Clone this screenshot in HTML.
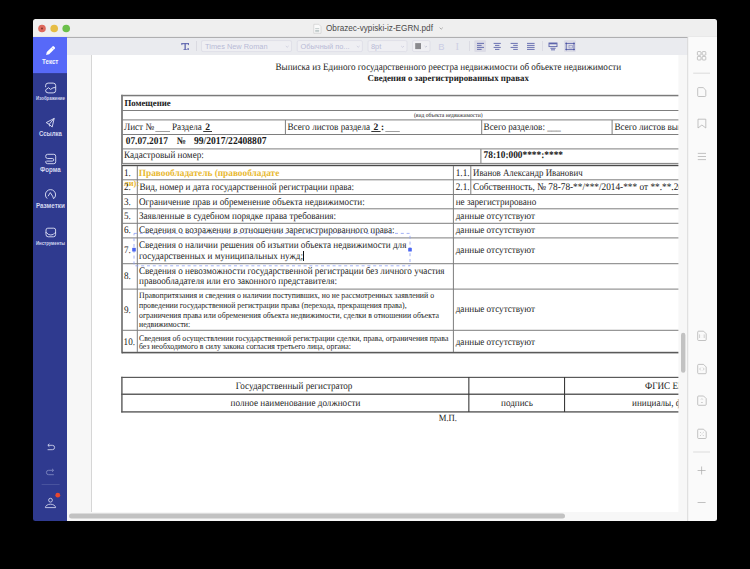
<!DOCTYPE html>
<html><head><meta charset="utf-8">
<style>
*{margin:0;padding:0;box-sizing:border-box}
html,body{width:750px;height:569px;overflow:hidden;background:#000}
body{position:relative;font-family:"Liberation Sans",sans-serif}
.a{position:absolute}
#win{left:33px;top:19px;width:684px;height:502px;border-radius:4px;overflow:hidden;background:#f6f6f6}
svg{position:absolute;left:0;top:0;overflow:visible}
</style></head>
<body>
<!-- CHROME SVG (body coords) -->
<svg width="750" height="569" viewBox="0 0 750 569">
  <defs>
    <clipPath id="wclip"><rect x="33" y="19" width="684" height="502" rx="2.5"/></clipPath>
    <clipPath id="pclip"><rect x="91" y="55" width="587.4" height="457"/></clipPath>
  </defs>
  <g clip-path="url(#wclip)">
    <!-- title bar -->
    <rect x="33" y="19" width="684" height="18" fill="#efefef"/>
    <rect x="33" y="36.6" width="684" height="1" fill="#e0e0e0"/>
    <circle cx="42" cy="28.5" r="3.8" fill="#de6a5e"/>
    <circle cx="42" cy="28.5" r="0.9" fill="#7a2a22"/>
    <circle cx="54.2" cy="28.5" r="3.8" fill="#e6bd45"/>
    <circle cx="66.2" cy="28.5" r="3.8" fill="#6cc04b"/>
    <!-- title -->
    <g id="doci">
      <path d="M313.8 24.3 h5 l2.2 2.2 v6.8 h-7.2 z" fill="#fafafa" stroke="#c8c8c8" stroke-width="0.6"/>
      <rect x="315.2" y="28.5" width="4" height="0.6" fill="#9aa"/>
      <rect x="315.2" y="30" width="4" height="0.6" fill="#9aa"/>
      <rect x="315.2" y="31.5" width="4" height="0.6" fill="#9aa"/>
    </g>
    <text x="326" y="31.4" font-family="Liberation Sans" font-size="8.2" fill="#4a4a4a">Obrazec-vypiski-iz-EGRN.pdf</text>
    <path d="M439.6 27.6 l1.6 1.6 l1.6 -1.6" fill="none" stroke="#9a9a9a" stroke-width="0.8"/>

    <!-- sidebar -->
    <rect x="33" y="37" width="34" height="484" fill="#2f3a8f"/>
    <rect x="33" y="37" width="34" height="36.4" fill="#5769f8"/>
    <rect x="33" y="73.4" width="34" height="0.7" fill="#2b3586"/>
    <g id="sb" font-family="Liberation Sans" font-weight="bold" text-anchor="middle">
      <!-- pencil -->
      <path d="M46.1 54.9 L46.8 52 L52.4 46.4 a1.1 1.1 0 0 1 1.55 0 l0.8 0.8 a1.1 1.1 0 0 1 0 1.55 L49.1 54.3 Z" fill="#ffffff"/>
      <path d="M51.6 47.4 L53.7 49.5" stroke="#5767f7" stroke-width="0.45"/>
      <text x="50.2" y="63.8" font-size="6.6" textLength="16.4" lengthAdjust="spacingAndGlyphs" fill="#f4f5ff">Текст</text>
      <!-- image -->
      <path d="M45.6 87.2 V85.6 a2.5 2.5 0 0 1 2.5 -2.5 H53.2 a2.5 2.5 0 0 1 2.5 2.5 V90.4 a2.5 2.5 0 0 1 -2.5 2.5 H48.1 a2.5 2.5 0 0 1 -2.5 -2.5 V89.9 L48.5 87.7 L50.6 89.4 L53 87.8 L55.7 87.5" fill="none" stroke="#d4d8f0" stroke-width="1" stroke-linejoin="round"/>
      <text x="50.5" y="99.6" font-size="4.6" textLength="29" lengthAdjust="spacingAndGlyphs" fill="#d3d7ef">Изображение</text>
      <!-- link / plane -->
      <path d="M54.2 118.4 L46.2 122.6 L49.2 124.3 L52.2 127 Z" fill="none" stroke="#dfe2f6" stroke-width="0.9" stroke-linejoin="round"/>
      <path d="M54.2 118.4 L49.2 124.3 L49.6 126.4" fill="none" stroke="#dfe2f6" stroke-width="0.9"/>
      <text x="50.4" y="136.3" font-size="6.6" textLength="23" lengthAdjust="spacingAndGlyphs" fill="#d3d7ef">Ссылка</text>
      <!-- form -->
      <path d="M47.6 154.3 H53.8 a1.9 1.9 0 0 1 1.9 1.9 V161.8 a1.9 1.9 0 0 1 -1.9 1.9 H47.6 a1.9 1.9 0 0 1 -1.9 -1.9 V161.2" fill="none" stroke="#dfe2f6" stroke-width="0.9"/>
      <path d="M47.6 154.3 a1.9 1.9 0 0 0 -1.9 1.9 v0.4 a1.9 1.9 0 0 0 1.9 1.9 H52.4 a1.3 1.3 0 0 1 0 2.6 H46.4" fill="none" stroke="#dfe2f6" stroke-width="0.9"/>
      <text x="50.4" y="172.3" font-size="6.6" textLength="20.7" lengthAdjust="spacingAndGlyphs" fill="#d3d7ef">Форма</text>
      <!-- markup -->
      <path d="M47.2 198.6 A5.1 5.1 0 1 1 53.8 198.6" fill="none" stroke="#dfe2f6" stroke-width="0.9"/>
      <path d="M48.1 196.2 L50.3 192.6 L52.6 196.2 L53.6 198.8" fill="none" stroke="#dfe2f6" stroke-width="0.9" stroke-linejoin="round"/>
      <text x="50.4" y="208.3" font-size="6.6" textLength="29" lengthAdjust="spacingAndGlyphs" fill="#d3d7ef">Разметки</text>
      <!-- tools -->
      <path d="M47.8 228.2 H53.8 a1.8 1.8 0 0 1 1.8 1.8 V234.6 a2.2 2.2 0 0 1 -2.2 2.2 H48.2 a2.2 2.2 0 0 1 -2.2 -2.2 V230 a1.8 1.8 0 0 1 1.8 -1.8 Z" fill="none" stroke="#dfe2f6" stroke-width="0.9"/>
      <path d="M45.6 232.6 h1 q1.2 2.4 4.2 2.4 q3 0 4.2 -2.4 h1" fill="none" stroke="#dfe2f6" stroke-width="0.9"/>
      <text x="50.5" y="244.5" font-size="4.6" textLength="29" lengthAdjust="spacingAndGlyphs" fill="#d3d7ef">Инструменты</text>
      <!-- undo -->
      <path d="M48 445.3 H52.4 a2.2 2.2 0 0 1 0 4.4 H47.6" fill="none" stroke="#dfe2f6" stroke-width="0.8"/>
      <path d="M49.4 443.8 L47.8 445.3 L49.4 446.8" fill="none" stroke="#dfe2f6" stroke-width="0.8"/>
      <!-- redo -->
      <path d="M53.4 470.3 H48.6 a2.2 2.2 0 0 0 0 4.4 H53.8" fill="none" stroke="#8890c6" stroke-width="0.8"/>
      <path d="M52 468.8 L53.6 470.3 L52 471.8" fill="none" stroke="#8890c6" stroke-width="0.8"/>
      <rect x="41.6" y="484.2" width="18" height="0.6" fill="#5a64a8"/>
      <!-- user -->
      <circle cx="50.5" cy="500.2" r="1.9" fill="none" stroke="#dfe2f6" stroke-width="0.8"/>
      <path d="M45.4 507.6 a5.1 3.4 0 0 1 10.2 0 Z" fill="none" stroke="#dfe2f6" stroke-width="0.8" stroke-linejoin="round"/>
      <circle cx="57.8" cy="495.2" r="2.4" fill="#e8472e"/>
    </g>

    <!-- toolbar -->
    <rect x="67" y="37.6" width="621" height="17.4" fill="#eaebef"/>
    <g id="tb">
      <!-- T. icon -->
      <g fill="#5f66ae">
      <rect x="181.5" y="43.1" width="7.4" height="1.1"/>
      <rect x="181.4" y="43.1" width="0.9" height="2"/>
      <rect x="188.1" y="43.1" width="0.9" height="2"/>
      <rect x="184.5" y="43.1" width="1.3" height="6.6"/>
      <rect x="183.5" y="49" width="3.3" height="0.8"/>
      <rect x="187.3" y="48.3" width="1.7" height="1.5"/>
      </g>
      <rect x="196" y="41" width="0.8" height="10" fill="#d6d6de"/>
      <!-- dropdowns -->
      <rect x="201.5" y="40.6" width="90" height="11" rx="1.5" fill="#efeff3" stroke="#dcdce6" stroke-width="0.8"/>
      <text x="205" y="49.2" font-family="Liberation Sans" font-size="7.4" fill="#b9bbd6">Times New Roman</text>
      <path d="M285.8 46 l1.4 1.3 l1.4 -1.3" fill="none" stroke="#c4c6d8" stroke-width="0.7"/>
      <rect x="297.2" y="40.6" width="65.2" height="11" rx="1.5" fill="#efeff3" stroke="#dcdce6" stroke-width="0.8"/>
      <text x="300.5" y="49.2" font-family="Liberation Sans" font-size="7.4" fill="#b9bbd6">Обычный по...</text>
      <path d="M356.8 46 l1.4 1.3 l1.4 -1.3" fill="none" stroke="#c4c6d8" stroke-width="0.7"/>
      <rect x="368" y="40.6" width="39" height="11" rx="1.5" fill="#efeff3" stroke="#dcdce6" stroke-width="0.8"/>
      <text x="371" y="49.2" font-family="Liberation Sans" font-size="7.4" fill="#b9bbd6">8pt</text>
      <path d="M401.2 46 l1.4 1.3 l1.4 -1.3" fill="none" stroke="#c4c6d8" stroke-width="0.7"/>
      <rect x="412.5" y="40.6" width="17.5" height="11" rx="1.5" fill="#efeff3" stroke="#dcdce6" stroke-width="0.8"/>
      <rect x="415.2" y="43.1" width="5.8" height="6" fill="#8a8a8e"/>
      <path d="M424.6 46 l1.2 1.1 l1.2 -1.1" fill="none" stroke="#b8bacc" stroke-width="0.7"/>
      <text x="438.2" y="49.8" font-family="Liberation Sans" font-size="9.4" fill="#cacde5">B</text>
      <text x="455.4" y="50" font-family="Liberation Serif" font-size="10.5" fill="#cfd0e4">I</text>
      <rect x="469.2" y="41" width="0.8" height="10" fill="#d8d8e0"/>
      <!-- align left (active) -->
      <rect x="474.3" y="40.2" width="11.7" height="11.7" rx="1" fill="#dcdce6"/>
      <g fill="#5d64ab">
        <rect x="477" y="42.9" width="7" height="0.9"/>
        <rect x="477" y="44.9" width="4.6" height="0.9"/>
        <rect x="477" y="46.9" width="7" height="0.9"/>
        <rect x="477" y="48.9" width="4.6" height="0.9"/>
        <!-- center -->
        <rect x="493.6" y="42.9" width="7.2" height="0.9"/>
        <rect x="495" y="44.9" width="4.4" height="0.9"/>
        <rect x="493.6" y="46.9" width="7.2" height="0.9"/>
        <rect x="495" y="48.9" width="4.4" height="0.9"/>
        <!-- right -->
        <rect x="510.6" y="42.9" width="7.2" height="0.9"/>
        <rect x="513.2" y="44.9" width="4.6" height="0.9"/>
        <rect x="510.6" y="46.9" width="7.2" height="0.9"/>
        <rect x="513.2" y="48.9" width="4.6" height="0.9"/>
        <!-- justify -->
        <rect x="527" y="42.9" width="7.6" height="0.9"/>
        <rect x="527" y="44.9" width="7.6" height="0.9"/>
        <rect x="527" y="46.9" width="7.6" height="0.9"/>
        <rect x="527" y="48.9" width="7.6" height="0.9"/>
      </g>
      <rect x="542" y="41" width="0.8" height="10" fill="#d8d8e0"/>
      <!-- icon fit -->
      <rect x="549" y="43" width="8" height="3.6" fill="none" stroke="#5d64ab" stroke-width="0.9"/>
      <rect x="549.2" y="43" width="7.6" height="1.3" fill="#5d64ab"/>
      <rect x="550.4" y="47.8" width="5.2" height="0.9" fill="#5d64ab"/>
      <rect x="551" y="49.4" width="4" height="0.9" fill="#5d64ab"/>
      <!-- icon active -->
      <rect x="564" y="40.2" width="11.8" height="11.7" rx="1" fill="#dcdce6"/>
      <rect x="566.2" y="43.4" width="7.8" height="6.2" fill="none" stroke="#5d64ab" stroke-width="0.9"/>
      <rect x="569" y="45.4" width="3.6" height="2.6" fill="none" stroke="#8a8fc4" stroke-width="0.6"/>
      <g fill="#4b53a3"><circle cx="566.2" cy="43.4" r="0.8"/><circle cx="574" cy="43.4" r="0.8"/><circle cx="566.2" cy="49.6" r="0.8"/><circle cx="574" cy="49.6" r="0.8"/></g>
    </g>
    <!-- page area -->
    <rect x="67" y="55" width="621" height="466" fill="#f7f7f7"/>
    <rect x="91" y="55" width="587.4" height="457" fill="#ffffff"/>
    <rect x="91" y="55" width="1" height="457" fill="#d6d6d6"/>
    <g id="doc" clip-path="url(#pclip)" font-family="Liberation Serif" fill="#1a1a1a" text-rendering="geometricPrecision">
      <text x="275.5" y="70" font-size="10.05" textLength="345.58" lengthAdjust="spacingAndGlyphs">Выписка из Единого государственного реестра недвижимости об объекте недвижимости</text>
      <text x="367.5" y="81.1" font-weight="bold" font-size="9.11" textLength="161.34" lengthAdjust="spacingAndGlyphs">Сведения о зарегистрированных правах</text>
      <!-- table lines -->
      <g id="lines" stroke="none">
        <rect x="121.2" y="94.8" width="560" height="1.5" fill="#7a7a7a"/>
        <rect x="121.1" y="94.8" width="1.8" height="258.6" fill="#7a7a7a"/>
        <rect x="122" y="110" width="560" height="1" fill="#7e7e7e"/>
        <rect x="122" y="119.4" width="560" height="1" fill="#7e7e7e"/>
        <rect x="122" y="134" width="560" height="1" fill="#7e7e7e"/>
        <rect x="122" y="148.4" width="560" height="1" fill="#7e7e7e"/>
        <rect x="122" y="162.9" width="560" height="1" fill="#7e7e7e"/>
        <rect x="122" y="164" width="560" height="1" fill="#d0d0d0"/>
        <rect x="122" y="165" width="560" height="1.2" fill="#4a4a4a"/>
        <rect x="122" y="179.3" width="560" height="1" fill="#7e7e7e"/>
        <rect x="122" y="194" width="560" height="1" fill="#7e7e7e"/>
        <rect x="122" y="208.3" width="560" height="1" fill="#7e7e7e"/>
        <rect x="122" y="222.8" width="560" height="1" fill="#7e7e7e"/>
        <rect x="122" y="237.4" width="560" height="1" fill="#7e7e7e"/>
        <rect x="122" y="263.2" width="560" height="1" fill="#7e7e7e"/>
        <rect x="122" y="288.6" width="560" height="1" fill="#7e7e7e"/>
        <rect x="122" y="329.8" width="560" height="1" fill="#7e7e7e"/>
        <rect x="122" y="351.8" width="560" height="1.6" fill="#5a5a5a"/>
        <rect x="284.9" y="120" width="1" height="14.4" fill="#7e7e7e"/>
        <rect x="481.2" y="120" width="1" height="14.4" fill="#7e7e7e"/>
        <rect x="611.6" y="120" width="1" height="14.4" fill="#7e7e7e"/>
        <rect x="480.4" y="149" width="1" height="14.4" fill="#7e7e7e"/>
        <rect x="136.8" y="166" width="1" height="186" fill="#7e7e7e"/>
        <rect x="452.9" y="166" width="1" height="186" fill="#7e7e7e"/>
        <rect x="470.3" y="166" width="1" height="28.4" fill="#7e7e7e"/>
        <!-- signature table -->
        <rect x="121.2" y="376.8" width="560" height="1.2" fill="#5a5a5a"/>
        <rect x="121.2" y="393.6" width="560" height="1.2" fill="#3a3a3a"/>
        <rect x="121.2" y="411.2" width="560" height="1.4" fill="#5a5a5a"/>
        <rect x="121.2" y="376.8" width="1.4" height="35.6" fill="#5a5a5a"/>
        <rect x="468.3" y="377" width="1.1" height="35" fill="#3a3a3a"/>
        <rect x="564" y="377" width="1.1" height="35" fill="#3a3a3a"/>
      </g>
      <g font-size="9.15">
        <text x="124.4" y="106" font-weight="bold" font-size="9.06" textLength="46.34" lengthAdjust="spacingAndGlyphs">Помещение</text>
        <text x="414" y="117" font-size="6.16" textLength="68.67" lengthAdjust="spacingAndGlyphs">(вид объекта недвижимости)</text>
        <text x="124" y="130" font-size="10.07" textLength="30.11" lengthAdjust="spacingAndGlyphs">Лист №</text>
        <rect x="155.3" y="131" width="14.7" height="0.7" fill="#777" stroke="none"/>
        <text x="172" y="130" font-size="10.07" textLength="29.88" lengthAdjust="spacingAndGlyphs">Раздела</text>
        <text x="205.2" y="130" font-weight="bold" font-size="9.89" textLength="4.80" lengthAdjust="spacingAndGlyphs">2</text>
        <rect x="203.2" y="131" width="8.8" height="0.9" fill="#222" stroke="none"/>
        <text x="287.5" y="130" font-size="10.07" textLength="82.52" lengthAdjust="spacingAndGlyphs">Всего листов раздела</text>
        <text x="373.4" y="130" font-weight="bold" font-size="9.89" textLength="4.80" lengthAdjust="spacingAndGlyphs">2</text>
        <rect x="371.3" y="131" width="9.3" height="0.9" fill="#222" stroke="none"/>
        <text x="381" y="130" font-weight="bold" font-size="9.42" textLength="3.05" lengthAdjust="spacingAndGlyphs">:</text>
        <rect x="385.3" y="131.2" width="14.5" height="0.7" fill="#777" stroke="none"/>
        <text x="483.6" y="130" font-size="10.07" textLength="77.34" lengthAdjust="spacingAndGlyphs">Всего разделов: ___</text>
        <text x="614.4" y="130" font-size="10.07" textLength="105.25" lengthAdjust="spacingAndGlyphs">Всего листов выписки: ___</text>
        <g font-weight="bold">
          <text x="125.7" y="144" font-size="10.34" textLength="42.19" lengthAdjust="spacingAndGlyphs">07.07.2017</text>
          <text x="176.7" y="144" font-size="10.07" textLength="9.17" lengthAdjust="spacingAndGlyphs">№</text>
          <text x="194" y="144" font-size="10.56" textLength="72.50" lengthAdjust="spacingAndGlyphs">99/2017/22408807</text>
          <text x="483.6" y="158.3" font-size="10.29" textLength="79.42" lengthAdjust="spacingAndGlyphs">78:10:000****:****</text>
        </g>
        <text x="124" y="158.2" font-size="10.07" textLength="79.78" lengthAdjust="spacingAndGlyphs">Кадастровый номер:</text>
        <!-- rows -->
        <text x="124" y="175.7" font-size="10.07" textLength="6.84" lengthAdjust="spacingAndGlyphs">1.</text>
        <text x="138.8" y="175.7" font-weight="bold" fill="#e8b830" font-size="9.58" textLength="140.47" lengthAdjust="spacingAndGlyphs">Правообладатель (правообладате</text>
        <text x="455.8" y="175.7" font-size="10.07" textLength="13.69" lengthAdjust="spacingAndGlyphs">1.1.</text>
        <text x="473" y="175.7" font-size="9.76" textLength="109.62" lengthAdjust="spacingAndGlyphs">Иванов Александр Иванович</text>
        <text x="123.9" y="186.3" font-weight="bold" fill="#e8b830" font-size="8.76" textLength="15.33" lengthAdjust="spacingAndGlyphs">ли):</text>
        <text x="124" y="189.8" font-size="10.07" textLength="6.84" lengthAdjust="spacingAndGlyphs">2.</text>
        <text x="139.4" y="189.8" font-size="10.07" textLength="214.69" lengthAdjust="spacingAndGlyphs">Вид, номер и дата государственной регистрации права:</text>
        <text x="455.8" y="189.8" font-size="10.07" textLength="13.69" lengthAdjust="spacingAndGlyphs">2.1.</text>
        <text x="473" y="189.8" font-size="10.23" textLength="219.25" lengthAdjust="spacingAndGlyphs">Собственность, № 78-78-**/***/2014-*** от **.**.2014</text>
        <text x="124" y="204.8" font-size="10.07" textLength="6.84" lengthAdjust="spacingAndGlyphs">3.</text>
        <text x="139" y="204.6" font-size="10.07" textLength="225.73" lengthAdjust="spacingAndGlyphs">Ограничение прав и обременение объекта недвижимости:</text>
        <text x="455.7" y="204.6" font-size="10.07" textLength="80.52" lengthAdjust="spacingAndGlyphs">не зарегистрировано</text>
        <text x="124" y="219.2" font-size="10.07" textLength="6.84" lengthAdjust="spacingAndGlyphs">5.</text>
        <text x="139" y="219" font-size="10.07" textLength="197.08" lengthAdjust="spacingAndGlyphs">Заявленные в судебном порядке права требования:</text>
        <text x="455.7" y="219" font-size="10.07" textLength="79.34" lengthAdjust="spacingAndGlyphs">данные отсутствуют</text>
        <text x="124" y="233.3" font-size="10.07" textLength="6.84" lengthAdjust="spacingAndGlyphs">6.</text>
        <text x="139" y="233.3" font-size="10.07" textLength="255.53" lengthAdjust="spacingAndGlyphs">Сведения о возражении в отношении зарегистрированного права:</text>
        <text x="455.7" y="233.4" font-size="10.07" textLength="79.34" lengthAdjust="spacingAndGlyphs">данные отсутствуют</text>
        <text x="124" y="253.3" font-size="10.07" textLength="6.84" lengthAdjust="spacingAndGlyphs">7.</text>
        <text x="139" y="248" font-size="10.07" textLength="267.34" lengthAdjust="spacingAndGlyphs">Сведения о наличии решения об изъятии объекта недвижимости для</text>
        <text x="139" y="259.2" font-size="10.07" textLength="164.00" lengthAdjust="spacingAndGlyphs">государственных и муниципальных нужд;</text>
        <text x="455.7" y="253" font-size="10.07" textLength="79.34" lengthAdjust="spacingAndGlyphs">данные отсутствуют</text>
        <text x="124" y="279.4" font-size="10.07" textLength="6.84" lengthAdjust="spacingAndGlyphs">8.</text>
        <text x="139" y="273.7" font-size="10.07" textLength="305.53" lengthAdjust="spacingAndGlyphs">Сведения о невозможности государственной регистрации без личного участия</text>
        <text x="139" y="284.2" font-size="10.07" textLength="198.03" lengthAdjust="spacingAndGlyphs">правообладателя или его законного представителя:</text>
        <text x="124" y="312.8" font-size="10.07" textLength="6.84" lengthAdjust="spacingAndGlyphs">9.</text>
        <g font-size="7.8">
          <text x="139" y="298.4" font-size="8.58" textLength="295.05" lengthAdjust="spacingAndGlyphs">Правопритязания и сведения о наличии поступивших, но не рассмотренных заявлений о</text>
          <text x="139" y="308" font-size="8.58" textLength="267.64" lengthAdjust="spacingAndGlyphs">проведении государственной регистрации права (перехода, прекращения права),</text>
          <text x="139" y="317.6" font-size="8.58" textLength="299.89" lengthAdjust="spacingAndGlyphs">ограничения права или обременения объекта недвижимости, сделки в отношении объекта</text>
          <text x="139" y="327.1" font-size="8.58" textLength="51.16" lengthAdjust="spacingAndGlyphs">недвижимости:</text>
          <text x="139" y="340.6" font-size="8.58" textLength="309.38" lengthAdjust="spacingAndGlyphs">Сведения об осуществлении государственной регистрации сделки, права, ограничения права</text>
          <text x="139" y="349.4" font-size="8.58" textLength="211.84" lengthAdjust="spacingAndGlyphs">без необходимого в силу закона согласия третьего лица, органа:</text>
        </g>
        <text x="455.7" y="312.4" font-size="10.07" textLength="79.34" lengthAdjust="spacingAndGlyphs">данные отсутствуют</text>
        <text x="123.6" y="345" font-size="10.07" textLength="11.41" lengthAdjust="spacingAndGlyphs">10.</text>
        <text x="455.7" y="344.6" font-size="10.07" textLength="79.34" lengthAdjust="spacingAndGlyphs">данные отсутствуют</text>
        <!-- signature -->
        <text x="235.8" y="388.9" font-size="10.07" textLength="116.61" lengthAdjust="spacingAndGlyphs">Государственный регистратор</text>
        <text x="230.6" y="405.7" font-size="10.07" textLength="129.73" lengthAdjust="spacingAndGlyphs">полное наименование должности</text>
        <text x="501" y="405.7" font-size="10.07" textLength="31.81" lengthAdjust="spacingAndGlyphs">подпись</text>
        <text x="645" y="388.9" font-size="10.07" textLength="49.97" lengthAdjust="spacingAndGlyphs">ФГИС ЕГРН</text>
        <text x="632" y="405.7" font-size="10.07" textLength="78.06" lengthAdjust="spacingAndGlyphs">инициалы, фамилия</text>
        <text x="438.7" y="420.8" font-size="9.54" textLength="18.28" lengthAdjust="spacingAndGlyphs">М.П.</text>
      </g>
    </g>
    <g id="editbox">
      <rect x="134" y="233.4" width="276" height="32.4" fill="none" stroke="#8da0f4" stroke-width="0.8" stroke-dasharray="3 2.8"/>
      <rect x="132.2" y="247.8" width="3.6" height="3.8" rx="0.6" fill="#4b66f2"/>
      <rect x="408.2" y="247.8" width="3.6" height="3.8" rx="0.6" fill="#4b66f2"/>
      <rect x="303" y="251" width="1" height="10" fill="#111"/>
    </g>
    <!-- right panel -->
    <rect x="688" y="37" width="29" height="484" fill="#fafafa"/>
    <rect x="687.3" y="37" width="0.9" height="484" fill="#d6d6d6"/>
    <g id="rpi" fill="none" stroke="#b4b4b4" stroke-width="0.8">
      <!-- grid -->
      <rect x="697.4" y="51.6" width="3.6" height="3.6" rx="0.7"/>
      <rect x="702.2" y="51.6" width="3.6" height="3.6" rx="0.7"/>
      <rect x="697.4" y="56.4" width="3.6" height="3.6" rx="0.7"/>
      <rect x="702.2" y="56.4" width="3.6" height="3.6" rx="0.7"/>
      <path d="M693.2 73.2 H710" stroke="#d4d4d4"/>
      <!-- page -->
      <path d="M698.6 87.6 H703.2 L705.8 90.2 V95.6 a0.9 0.9 0 0 1 -0.9 0.9 H698.6 a0.9 0.9 0 0 1 -0.9 -0.9 V88.5 a0.9 0.9 0 0 1 0.9 -0.9 Z"/>
      <!-- bookmark -->
      <path d="M698 119.2 H705.8 V128 L701.9 125 L698 128 Z" stroke-linejoin="round"/>
      <!-- menu -->
      <path d="M697.8 153.4 H706 M697.8 156.5 H706 M697.8 159.6 H706"/>
      <!-- lower icons -->
      <g id="li1">
        <path d="M698.6 331.2 H703.6 L706.2 333.8 V339.6 a0.9 0.9 0 0 1 -0.9 0.9 H698.6 a0.9 0.9 0 0 1 -0.9 -0.9 V332.1 a0.9 0.9 0 0 1 0.9 -0.9 Z"/>
      </g>
      <path d="M699.6 334.4 V338 M704.2 334.4 V338 M701.9 335.4 V335.5 M701.9 337.2 V337.3" stroke-width="0.6"/>
      <path d="M698.6 364.4 H703.6 L706.2 367 V372.8 a0.9 0.9 0 0 1 -0.9 0.9 H698.6 a0.9 0.9 0 0 1 -0.9 -0.9 V365.3 a0.9 0.9 0 0 1 0.9 -0.9 Z"/>
      <path d="M700.8 367.6 L699.6 369 L700.8 370.4 M703 367.6 L704.2 369 L703 370.4" stroke-width="0.6"/>
      <path d="M698.6 396 H703.6 L706.2 398.6 V404.4 a0.9 0.9 0 0 1 -0.9 0.9 H698.6 a0.9 0.9 0 0 1 -0.9 -0.9 V396.9 a0.9 0.9 0 0 1 0.9 -0.9 Z"/>
      <path d="M701 399.6 L701.9 398.6 L702.8 399.6 M701 402 L701.9 403 L702.8 402" stroke-width="0.6"/>
      <path d="M698.6 429.2 H703.6 L706.2 431.8 V437.6 a0.9 0.9 0 0 1 -0.9 0.9 H698.6 a0.9 0.9 0 0 1 -0.9 -0.9 V430.1 a0.9 0.9 0 0 1 0.9 -0.9 Z"/>
      <path d="M700 432 L701.2 433.2 M703.8 432 L702.6 433.2 M700 436 L701.2 434.8 M703.8 436 L702.6 434.8" stroke-width="0.6"/>
      <path d="M693.2 452 H710" stroke="#d4d4d4"/>
      <path d="M697.6 470.5 H705.6 M701.6 466.5 V474.5" stroke="#a8a8a8" stroke-width="0.7"/>
      <path d="M697.6 502.5 H705.6" stroke="#a8a8a8" stroke-width="0.7"/>
    </g>
    <!-- scrollbars -->
    <rect x="681" y="332.8" width="4.4" height="40" rx="2.2" fill="#c2c2c2"/>
    <rect x="69" y="513.6" width="496" height="5" rx="2.5" fill="#c2c2c2"/>
  </g>
</svg>
</body></html>
